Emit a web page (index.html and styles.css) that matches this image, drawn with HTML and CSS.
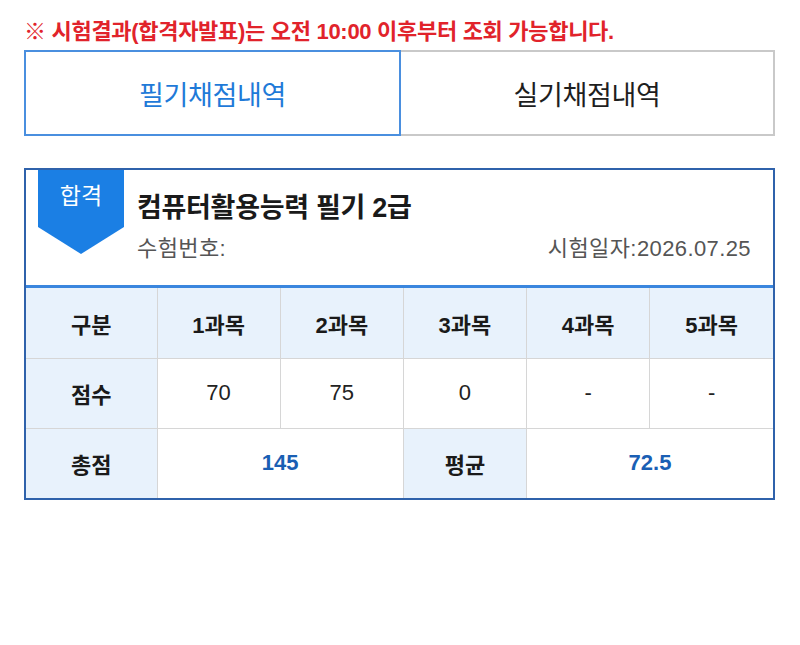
FILE: index.html
```html
<!DOCTYPE html>
<html lang="ko">
<head>
<meta charset="utf-8">
<link rel="stylesheet" href="styles.css">
</head>
<body>
<div class="page">
  <p class="notice">※ 시험결과(합격자발표)는 오전 <b>10:00</b> 이후부터 조회 가능합니다.</p>
  <div class="tabs">
    <div class="tab active">필기채점내역</div>
    <div class="tab">실기채점내역</div>
  </div>
  <div class="card">
    <div class="card-head">
      <div class="badge">합격</div>
      <div class="info">
        <div class="title">컴퓨터활용능력 필기 2급</div>
        <div class="meta">
          <span>수험번호:</span>
          <span>시험일자:2026.07.25</span>
        </div>
      </div>
    </div>
    <table class="scores">
      <colgroup>
        <col class="c-first">
        <col><col><col><col><col>
      </colgroup>
      <tr class="head">
        <th>구분</th><th>1과목</th><th>2과목</th><th>3과목</th><th>4과목</th><th>5과목</th>
      </tr>
      <tr>
        <th>점수</th><td>70</td><td>75</td><td>0</td><td>-</td><td>-</td>
      </tr>
      <tr>
        <th>총점</th><td colspan="2" class="sum">145</td><th>평균</th><td colspan="2" class="sum">72.5</td>
      </tr>
    </table>
  </div>
</div>
</body>
</html>
```
FILE: styles.css
```css
* { box-sizing: border-box; }
html, body { margin: 0; padding: 0; background: #fff; }
body {
  font-family: "Liberation Sans", "Noto Sans CJK KR", sans-serif;
  color: #222;
}
.page {
  width: 751px;
  margin-left: 24px;
  padding-top: 19px;
}
.notice {
  margin: 0;
  color: #e1232b;
  font-size: 22px;
  font-weight: 700;
  line-height: 26px;
  letter-spacing: -0.3px;
}
.notice b { font-weight: 700; }
.tabs {
  display: flex;
  margin-top: 5px;
  height: 86px;
}
.tab {
  flex: 1;
  display: flex;
  align-items: center;
  justify-content: center;
  border: 2px solid #c9c9c9;
  border-left: none;
  font-size: 27px;
  font-weight: 400;
  color: #1e1e1e;
  letter-spacing: -0.3px;
}
.tab.active {
  border: 2px solid #4a8fdf;
  color: #1f7ad8;
  flex: 0 0 377px;
}
.card {
  margin-top: 32px;
  border: 2px solid #2f62ab;
}
.card-head {
  display: flex;
  height: 118px;
  border-bottom: 3px solid #3a86de;
}
.badge {
  width: 86px;
  height: 84px;
  margin-left: 12px;
  background: #1b7fe4;
  color: #fff;
  font-size: 23px;
  text-align: center;
  padding-top: 11px;
  line-height: 30px;
  clip-path: polygon(0 0, 100% 0, 100% 57px, 50% 100%, 0 57px);
}
.info {
  flex: 1;
  margin-left: 13px;
  margin-right: 22px;
  padding-top: 20px;
}
.title {
  font-size: 27px;
  font-weight: 600;
  line-height: 36px;
  color: #1a1a1a;
  letter-spacing: -0.3px;
}
.meta {
  display: flex;
  justify-content: space-between;
  margin-top: 9px;
  font-size: 22px;
  line-height: 28px;
  color: #555;
  letter-spacing: 0.4px;
}
.scores {
  width: 100%;
  border-collapse: collapse;
  table-layout: fixed;
}
.scores col.c-first { width: 131px; }
.scores th, .scores td {
  height: 70px;
  border: 1px solid #d6d6d6;
  text-align: center;
  font-size: 22px;
  padding: 0;
}
.scores tr:first-child th { border-top: none; }
.scores tr:last-child th, .scores tr:last-child td { border-bottom: none; }
.scores tr th:first-child { border-left: none; }
.scores tr > :last-child { border-right: none; }
.scores th {
  background: #e8f2fc;
  font-weight: 700;
  color: #1a1a1a;
}
.scores td {
  background: #fff;
  color: #222;
}
.scores td.sum {
  color: #1a5fb4;
  font-weight: 700;
}
```
